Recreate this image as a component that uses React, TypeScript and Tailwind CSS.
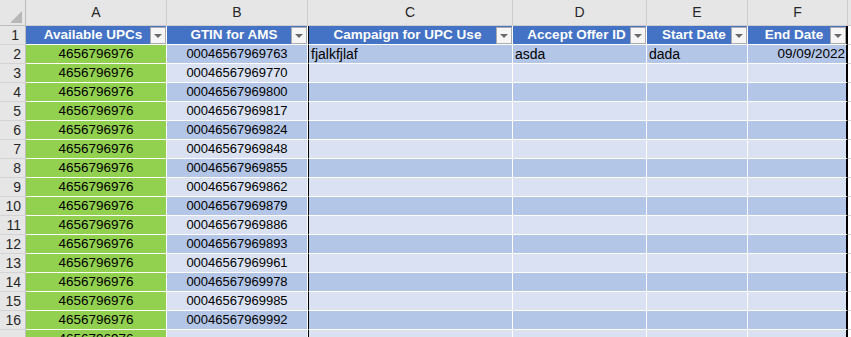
const cols = [
  { letter: 'A', title: 'Available UPCs', w: 'w-[141px]' },
  { letter: 'B', title: 'GTIN for AMS', w: 'w-[141px]' },
  { letter: 'C', title: 'Campaign for UPC Use', w: 'w-[205px]' },
  { letter: 'D', title: 'Accept Offer ID', w: 'w-[134px]' },
  { letter: 'E', title: 'Start Date', w: 'w-[101px]' },
  { letter: 'F', title: 'End Date', w: 'w-[100px]' },
];

const gtins = [
  '00046567969763',
  '00046567969770',
  '00046567969800',
  '00046567969817',
  '00046567969824',
  '00046567969848',
  '00046567969855',
  '00046567969862',
  '00046567969879',
  '00046567969886',
  '00046567969893',
  '00046567969961',
  '00046567969978',
  '00046567969985',
  '00046567969992',
  '',
];

function FilterButton() {
  return (
    <div className="absolute right-0 top-[1px] flex h-[17px] w-[16px] items-center justify-center border border-[#ababab] bg-[#f6f6f6]">
      <div className="h-0 w-0 border-x-[4px] border-t-[4px] border-x-transparent border-t-[#6a6a6a]" />
    </div>
  );
}

export default function App() {
  return (
    <div className="h-[337px] w-[851px] overflow-hidden bg-white font-['Liberation_Sans',Arial,sans-serif] text-[13px] text-black">
      {/* column letters */}
      <div className="flex h-[26px] bg-[#e6e6e6]">
        <div className="relative h-[26px] w-[26px] shrink-0 border-b border-r border-[#bdbdbd]">
          <svg className="absolute bottom-[2px] right-[3px]" width="12" height="12" viewBox="0 0 12 12">
            <path d="M12 0 L12 12 L0 12 Z" fill="#b8b8b8" />
          </svg>
        </div>
        {cols.map((c) => (
          <div
            key={c.letter}
            className={`${c.w} flex h-[26px] shrink-0 items-center justify-center border-b border-r border-[#cdcdcd] text-[14px] text-[#262626]`}
          >
            {c.letter}
          </div>
        ))}
        <div className="h-[26px] flex-1 border-b border-[#cdcdcd]" />
      </div>

      {/* row 1: table header */}
      <div className="flex h-[19px]">
        <div className="flex h-[19px] w-[26px] shrink-0 items-center justify-end border-b border-r border-[#bdbdbd] border-b-[#d4d4d4] bg-[#e6e6e6] pr-[6px] text-[14px] text-[#262626]">
          1
        </div>
        {cols.map((c, i) => (
          <div
            key={c.title}
            className={`${c.w} relative flex h-[19px] shrink-0 items-center justify-center border-b border-r border-white bg-[#4472c4] pr-[6px] text-[13.5px] font-bold text-white ${i === 2 ? 'border-l border-l-black' : ''} ${i === 5 ? 'border-r-2 border-r-black' : ''}`}
          >
            {c.title}
            <FilterButton />
          </div>
        ))}
        <div className="h-[19px] flex-1 border-b border-[#d4d4d4]" />
      </div>

      {/* data rows */}
      {gtins.map((g, idx) => {
        const row = idx + 2;
        const band = row % 2 === 0 ? 'bg-[#b4c6e7]' : 'bg-[#d9e1f2]';
        return (
          <div key={row} className="flex h-[19px]">
            <div className="flex h-[19px] w-[26px] shrink-0 items-center justify-end border-b border-r border-[#bdbdbd] border-b-[#d4d4d4] bg-[#e6e6e6] pr-[4px] text-[14px] text-[#262626]">
              {row < 17 ? row : ''}
            </div>
            <div className="flex h-[19px] w-[141px] shrink-0 items-center justify-center border-b border-r border-white bg-[#92d050] text-[13.5px]">
              4656796976
            </div>
            <div className={`flex h-[19px] w-[141px] shrink-0 items-center justify-center border-b border-r border-white text-[13px] ${band}`}>
              {g}
            </div>
            <div className={`flex h-[19px] w-[205px] shrink-0 items-center border-b border-r border-l border-white border-l-black pl-[2px] text-[14px] ${band}`}>
              {row === 2 ? 'fjalkfjlaf' : ''}
            </div>
            <div className={`flex h-[19px] w-[134px] shrink-0 items-center border-b border-r border-white pl-[2px] text-[14px] ${band}`}>
              {row === 2 ? 'asda' : ''}
            </div>
            <div className={`flex h-[19px] w-[101px] shrink-0 items-center border-b border-r border-white pl-[2px] text-[14px] ${band}`}>
              {row === 2 ? 'dada' : ''}
            </div>
            <div className={`flex h-[19px] w-[100px] shrink-0 items-center justify-end border-b border-r-2 border-white border-r-black pr-[1px] text-[13.5px] ${band}`}>
              {row === 2 ? '09/09/2022' : ''}
            </div>
            <div className="h-[19px] flex-1 border-b border-[#d4d4d4]" />
          </div>
        );
      })}
    </div>
  );
}
